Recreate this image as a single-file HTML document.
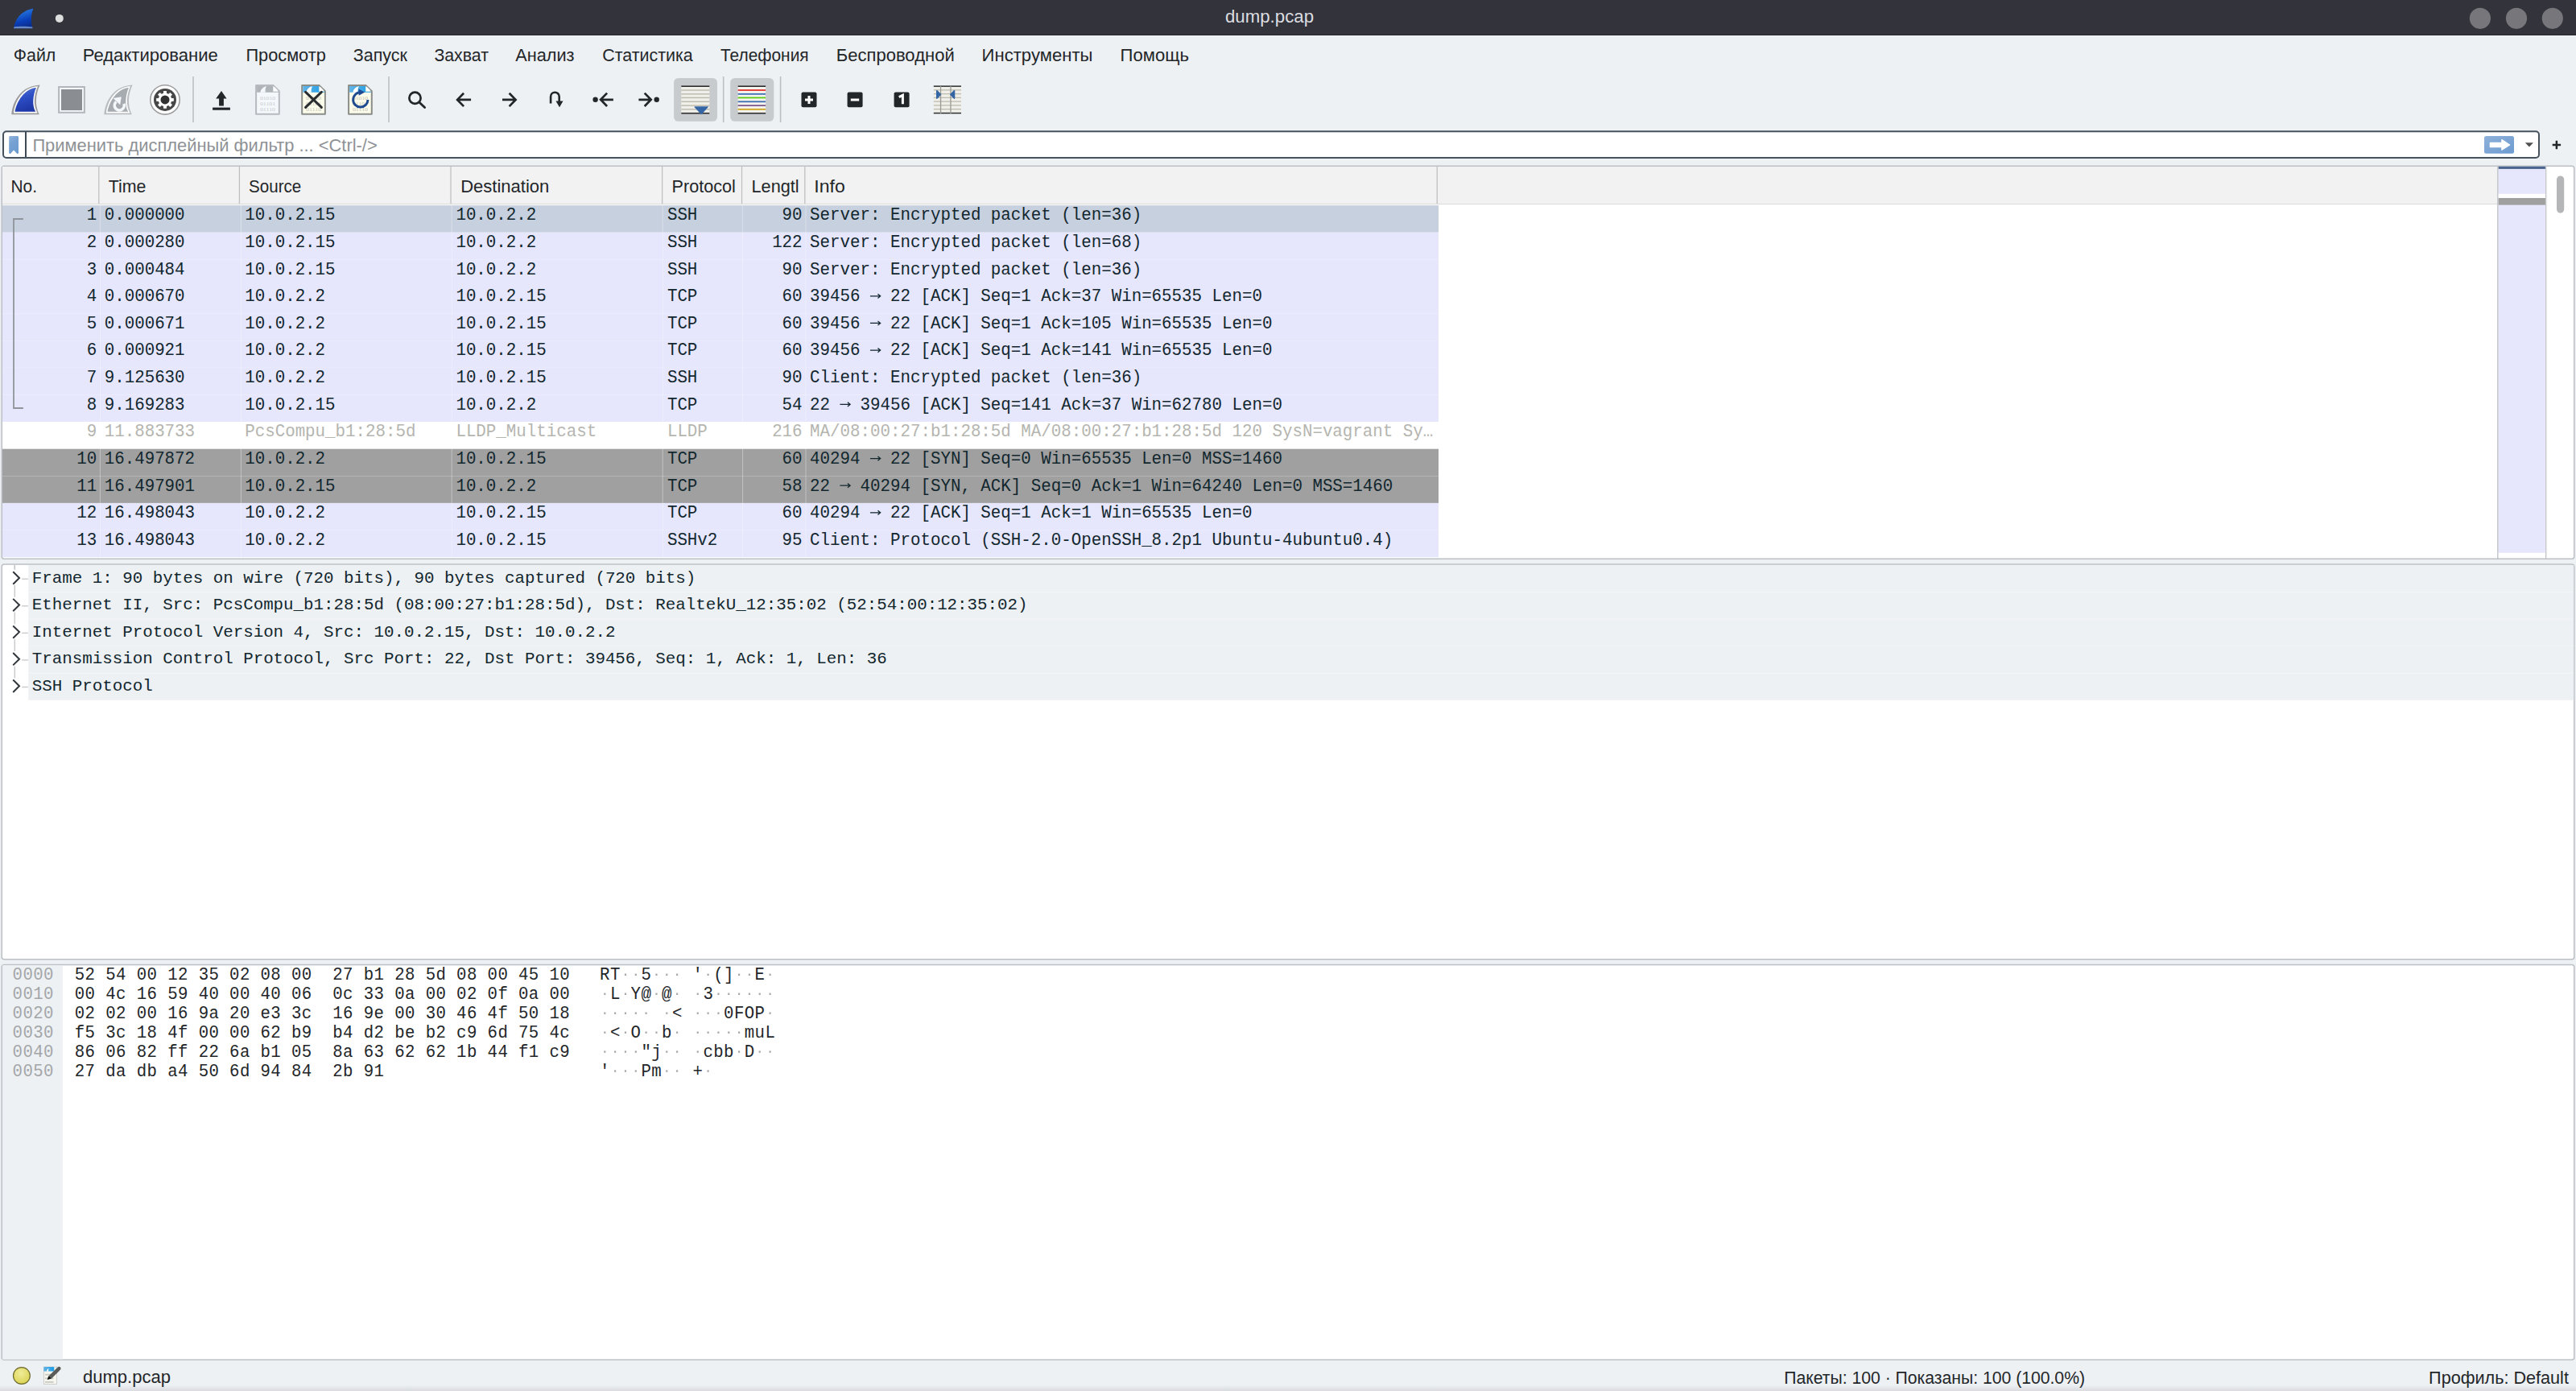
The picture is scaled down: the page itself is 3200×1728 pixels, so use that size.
<!DOCTYPE html><html><head><meta charset="utf-8"><title>dump.pcap - Wireshark</title><style>html,body{margin:0;padding:0;background:#eef1f4;overflow:hidden} svg{display:block} text{white-space:pre}</style></head><body>
<svg width="3200" height="1728" viewBox="0 0 3200 1728">
<defs>
<linearGradient id="finb" x1="0" y1="0" x2="0.3" y2="1"><stop offset="0" stop-color="#5a78d8"/><stop offset="0.5" stop-color="#2d4ec4"/><stop offset="1" stop-color="#1f38a8"/></linearGradient>
<linearGradient id="fint" x1="0" y1="0" x2="0.3" y2="1"><stop offset="0" stop-color="#2f8cf0"/><stop offset="0.7" stop-color="#0a3fb8"/><stop offset="1" stop-color="#0b2f90"/></linearGradient>
<linearGradient id="bkm" x1="0" y1="0" x2="0.4" y2="1"><stop offset="0" stop-color="#90b2dc"/><stop offset="0.5" stop-color="#74a0d2"/><stop offset="1" stop-color="#6f9ccf"/></linearGradient>
<linearGradient id="apb" x1="0" y1="0" x2="1" y2="1"><stop offset="0" stop-color="#8eb0da"/><stop offset="1" stop-color="#6c9bd0"/></linearGradient>
<linearGradient id="fileb" x1="0" y1="0" x2="1" y2="0"><stop offset="0" stop-color="#62b4e6"/><stop offset="1" stop-color="#1d9ee6"/></linearGradient>
<radialGradient id="yel" cx="0.45" cy="0.35" r="0.7"><stop offset="0" stop-color="#f0ec9a"/><stop offset="1" stop-color="#d9d24e"/></radialGradient>
</defs>
<rect x="0" y="0" width="3200" height="1728" fill="#eef1f4" />
<rect x="0" y="0" width="3200" height="44" fill="#32333b" />
<rect x="0" y="43" width="3200" height="1" fill="#25262c" />
<path d="M17 35.3 C19 24 26 13 41.5 10.8 C38.5 17 38 27 40.5 35.3 Z" fill="url(#fint)"/>
<path d="M17.5 33.5 C24 32.5 34 32.7 40.3 33.6 L40.5 35.3 L17 35.3 Z" fill="#8fb0e0" opacity="0.7"/>
<circle cx="73.8" cy="22.9" r="5" fill="#dedede"/>
<text x="1522" y="27.7" font-family="Liberation Sans" font-size="21.7" fill="#dcdde0" textLength="110" lengthAdjust="spacingAndGlyphs" >dump.pcap</text>
<circle cx="3080.9" cy="22.8" r="13.1" fill="#77767b"/>
<circle cx="3126" cy="22.8" r="13.1" fill="#77767b"/>
<circle cx="3170.8" cy="22.8" r="13.1" fill="#77767b"/>
<text x="16.8" y="75.7" font-family="Liberation Sans" font-size="21.7" fill="#232629" textLength="52.5" lengthAdjust="spacingAndGlyphs" >Файл</text>
<text x="102.7" y="75.7" font-family="Liberation Sans" font-size="21.7" fill="#232629" textLength="168.2" lengthAdjust="spacingAndGlyphs" >Редактирование</text>
<text x="305.4" y="75.7" font-family="Liberation Sans" font-size="21.7" fill="#232629" textLength="99.4" lengthAdjust="spacingAndGlyphs" >Просмотр</text>
<text x="438.8" y="75.7" font-family="Liberation Sans" font-size="21.7" fill="#232629" textLength="67.2" lengthAdjust="spacingAndGlyphs" >Запуск</text>
<text x="539.4" y="75.7" font-family="Liberation Sans" font-size="21.7" fill="#232629" textLength="67.6" lengthAdjust="spacingAndGlyphs" >Захват</text>
<text x="640.3" y="75.7" font-family="Liberation Sans" font-size="21.7" fill="#232629" textLength="73.2" lengthAdjust="spacingAndGlyphs" >Анализ</text>
<text x="748.2" y="75.7" font-family="Liberation Sans" font-size="21.7" fill="#232629" textLength="112.6" lengthAdjust="spacingAndGlyphs" >Статистика</text>
<text x="895" y="75.7" font-family="Liberation Sans" font-size="21.7" fill="#232629" textLength="109.6" lengthAdjust="spacingAndGlyphs" >Телефония</text>
<text x="1038.8" y="75.7" font-family="Liberation Sans" font-size="21.7" fill="#232629" textLength="146.9" lengthAdjust="spacingAndGlyphs" >Беспроводной</text>
<text x="1219.6" y="75.7" font-family="Liberation Sans" font-size="21.7" fill="#232629" textLength="137.8" lengthAdjust="spacingAndGlyphs" >Инструменты</text>
<text x="1391.6" y="75.7" font-family="Liberation Sans" font-size="21.7" fill="#232629" textLength="85.4" lengthAdjust="spacingAndGlyphs" >Помощь</text>
<path d="M14.30 142.30 C15.80 124.00 27.30 106.50 49.60 105.40 C44.30 117.00 42.80 130.00 48.80 142.30 Z" fill="#9b9b9b"/>
<path d="M16.90 140.60 C18.50 124.50 29.30 108.00 47.00 107.20 C42.30 118.00 40.90 130.00 46.50 140.60 Z" fill="#ffffff"/>
<path d="M18.50 138.80 C20.80 125.50 30.80 110.00 44.90 108.90 C40.80 119.00 39.70 130.50 44.20 138.80 Z" fill="url(#finb)"/>
<rect x="72.1" y="107" width="33.8" height="33.8" fill="#b3b7bb" />
<rect x="74.1" y="109" width="29.8" height="29.8" fill="#f4f8fb" />
<rect x="76" y="111" width="26" height="26" fill="#8a8e92" />
<path d="M129.30 142.30 C130.80 124.00 142.30 106.50 164.60 105.40 C159.30 117.00 157.80 130.00 163.80 142.30 Z" fill="#b9bdc1"/>
<path d="M131.90 140.60 C133.50 124.50 144.30 108.00 162.00 107.20 C157.30 118.00 155.90 130.00 161.50 140.60 Z" fill="#ffffff"/>
<path d="M133.50 138.80 C135.80 125.50 145.80 110.00 159.90 108.90 C155.80 119.00 154.70 130.50 159.20 138.80 Z" fill="#a7acb1"/>
<path d="M153.94 128.85 A6 6 0 1 1 144.44 126.3" fill="none" stroke="#f4f8fb" stroke-width="3.6"/>
<path d="M140.6 121.9 L150.8 120.3 L149.2 130.2 Z" fill="#f4f8fb"/>
<circle cx="205" cy="123.9" r="18.2" fill="#ffffff" stroke="#9d9d9d" stroke-width="1.6"/>
<circle cx="205" cy="123.9" r="14" fill="#474747"/>
<path d="M213.05 121.89 L215.83 121.99 L215.83 125.81 L213.05 125.91 L212.11 128.17 L214.01 130.21 L211.31 132.91 L209.27 131.01 L207.01 131.95 L206.91 134.73 L203.09 134.73 L202.99 131.95 L200.73 131.01 L198.69 132.91 L195.99 130.21 L197.89 128.17 L196.95 125.91 L194.17 125.81 L194.17 121.99 L196.95 121.89 L197.89 119.63 L195.99 117.59 L198.69 114.89 L200.73 116.79 L202.99 115.85 L203.09 113.07 L206.91 113.07 L207.01 115.85 L209.27 116.79 L211.31 114.89 L214.01 117.59 L212.11 119.63 Z" fill="#ffffff"/>
<circle cx="205" cy="123.9" r="5.5" fill="#313131"/>
<rect x="239.2" y="95" width="1.6" height="57" fill="#bcc0c3" />
<rect x="482.2" y="95" width="1.6" height="57" fill="#bcc0c3" />
<rect x="897.9000000000001" y="95" width="1.6" height="57" fill="#bcc0c3" />
<rect x="968.8000000000001" y="95" width="1.6" height="57" fill="#bcc0c3" />
<path d="M275 113 L281.6 122.5 L277.9 122.5 L277.9 131.6 L272.1 131.6 L272.1 122.5 L268.2 122.5 Z" fill="#232629"/>
<rect x="264.1" y="133.6" width="21.8" height="3.1" fill="#1f2226" />
<path d="M318.1 106.1 L339.6 106.1 L346.8 113.3 L346.8 141.7 L318.1 141.7 Z" fill="#f5f8fb" stroke="#b6babe" stroke-width="2" stroke-linejoin="round"/>
<path d="M319.1 107.1 L339.20000000000005 107.1 L339.20000000000005 113.7 L345.8 113.7 L345.8 114.7 L319.1 114.7 Z" fill="#afb4b9"/>
<path d="M340.20000000000005 107.3 L340.20000000000005 112.7 L345.6 112.7 Z" fill="#ffffff"/>
<path d="M323.3 114.7 C324.1 110.6 327.1 107.89999999999999 330.90000000000003 107.3 C329.70000000000005 109.5 329.3 112.1 329.70000000000005 114.7 Z" fill="#f5f8fb"/>
<text x="322.90000000000003" y="123.8" font-family="Liberation Serif" font-size="6.4" fill="#c6cacd" textLength="19.2" lengthAdjust="spacingAndGlyphs">01010</text>
<text x="322.90000000000003" y="130.85" font-family="Liberation Serif" font-size="6.4" fill="#c6cacd" textLength="19.2" lengthAdjust="spacingAndGlyphs">01101</text>
<text x="322.90000000000003" y="137.9" font-family="Liberation Serif" font-size="6.4" fill="#c6cacd" textLength="19.2" lengthAdjust="spacingAndGlyphs">01110</text>
<path d="M375.2 106.1 L396.7 106.1 L403.9 113.3 L403.9 141.7 L375.2 141.7 Z" fill="#fcfcea" stroke="#8b8d89" stroke-width="2" stroke-linejoin="round"/>
<path d="M376.2 107.1 L396.3 107.1 L396.3 113.7 L402.9 113.7 L402.9 114.7 L376.2 114.7 Z" fill="url(#fileb)"/>
<path d="M397.3 107.3 L397.3 112.7 L402.7 112.7 Z" fill="#ffffff"/>
<path d="M380.4 114.7 C381.2 110.6 384.2 107.89999999999999 388.0 107.3 C386.8 109.5 386.4 112.1 386.8 114.7 Z" fill="#ffffff"/>
<text x="380.0" y="123.8" font-family="Liberation Serif" font-size="6.4" fill="#c2c2b6" textLength="19.2" lengthAdjust="spacingAndGlyphs">01010</text>
<text x="380.0" y="130.85" font-family="Liberation Serif" font-size="6.4" fill="#c2c2b6" textLength="19.2" lengthAdjust="spacingAndGlyphs">01101</text>
<text x="380.0" y="137.9" font-family="Liberation Serif" font-size="6.4" fill="#c2c2b6" textLength="19.2" lengthAdjust="spacingAndGlyphs">01110</text>
<path d="M379.6 114.4 L399.4 133.4 M399.4 114.4 L379.6 133.4" stroke="#2a2d30" stroke-width="3" stroke-linecap="round"/>
<path d="M433.1 106.1 L454.6 106.1 L461.8 113.3 L461.8 141.7 L433.1 141.7 Z" fill="#fcfcea" stroke="#8b8d89" stroke-width="2" stroke-linejoin="round"/>
<path d="M434.1 107.1 L454.20000000000005 107.1 L454.20000000000005 113.7 L460.8 113.7 L460.8 114.7 L434.1 114.7 Z" fill="url(#fileb)"/>
<path d="M455.20000000000005 107.3 L455.20000000000005 112.7 L460.6 112.7 Z" fill="#ffffff"/>
<path d="M438.3 114.7 C439.1 110.6 442.1 107.89999999999999 445.90000000000003 107.3 C444.70000000000005 109.5 444.3 112.1 444.70000000000005 114.7 Z" fill="#ffffff"/>
<text x="437.90000000000003" y="123.8" font-family="Liberation Serif" font-size="6.4" fill="#c2c2b6" textLength="19.2" lengthAdjust="spacingAndGlyphs">01010</text>
<text x="437.90000000000003" y="130.85" font-family="Liberation Serif" font-size="6.4" fill="#c2c2b6" textLength="19.2" lengthAdjust="spacingAndGlyphs">01101</text>
<text x="437.90000000000003" y="137.9" font-family="Liberation Serif" font-size="6.4" fill="#c2c2b6" textLength="19.2" lengthAdjust="spacingAndGlyphs">01110</text>
<path d="M447.8 114.75 A9.15 9.15 0 1 0 456.95 123.9" fill="none" stroke="#1f4b91" stroke-width="2.9"/>
<path d="M445.4 110.4 L453.2 114.6 L445.7 118.8 Z" fill="#1f4b91"/>
<circle cx="515.5" cy="121.7" r="7.1" fill="none" stroke="#232629" stroke-width="2.7"/>
<path d="M520.8 127 L527.6 133.6" stroke="#232629" stroke-width="2.8" stroke-linecap="round"/>
<path d="M576.1 115.7 L568.1 123.9 L576.1 132.1 M568.5 123.9 L585.1 123.9" fill="none" stroke="#232629" stroke-width="2.7"/>
<path d="M632.6 115.7 L640.6 123.9 L632.6 132.1 M624 123.9 L640.2 123.9" fill="none" stroke="#232629" stroke-width="2.7"/>
<path d="M684.1 128.5 L684.1 120 A5.3 5.3 0 0 1 694.7 120 L694.7 126" fill="none" stroke="#232629" stroke-width="2.6"/>
<path d="M690.5 125.4 L699.5 125.4 L695 133.2 Z" fill="#232629"/>
<circle cx="739.6" cy="123.8" r="3.2" fill="#232629"/>
<path d="M754.1 115.6 L746.1 123.8 L754.1 132 M746.5 123.8 L761.9 123.8" fill="none" stroke="#232629" stroke-width="2.7"/>
<circle cx="815.7" cy="123.8" r="3.2" fill="#232629"/>
<path d="M800.7 115.6 L808.7 123.8 L800.7 132 M793.4 123.8 L808.3 123.8" fill="none" stroke="#232629" stroke-width="2.7"/>
<rect x="837.1" y="96.9" width="53.9" height="53.9" fill="#c8cbce" rx="5.5" />
<rect x="846.3" y="107.5" width="35" height="33" fill="#f0efe9" />
<rect x="846.3" y="111.3" width="35" height="1.4" fill="#b9b9ad" />
<rect x="846.3" y="116.1" width="35" height="1.4" fill="#b9b9ad" />
<rect x="846.3" y="120.7" width="35" height="1.4" fill="#b9b9ad" />
<rect x="846.3" y="125.6" width="35" height="1.4" fill="#b9b9ad" />
<rect x="846.3" y="130.4" width="35" height="1.4" fill="#b9b9ad" />
<rect x="846.3" y="135.10000000000002" width="35" height="1.4" fill="#b9b9ad" />
<rect x="846.3" y="106.4" width="35" height="1.6" fill="#2b2d2e" />
<rect x="846.3" y="139.9" width="35" height="1.6" fill="#2b2d2e" />
<path d="M862.5 133 Q862 132.2 863.3 132.2 L879.2 132.2 Q880.5 132.2 879.8 133 L872.3 141.2 Q871.2 142.2 870.1 141.2 Z" fill="#3465a4"/>
<rect x="907.2" y="96.9" width="54.1" height="53.9" fill="#c8cbce" rx="5.5" />
<rect x="916.7" y="107.5" width="34.4" height="33" fill="#f4f3ee" />
<rect x="916.7" y="111.1" width="34.4" height="1.8" fill="#e5322d" />
<rect x="916.7" y="115.89999999999999" width="34.4" height="1.8" fill="#3a6db3" />
<rect x="916.7" y="120.5" width="34.4" height="1.8" fill="#5ccc14" />
<rect x="916.7" y="125.39999999999999" width="34.4" height="1.8" fill="#3a6db3" />
<rect x="916.7" y="130.2" width="34.4" height="1.8" fill="#7e5b8d" />
<rect x="916.7" y="134.9" width="34.4" height="1.8" fill="#cca51c" />
<rect x="916.7" y="106.4" width="34.4" height="1.6" fill="#2b2d2e" />
<rect x="916.7" y="139.9" width="34.4" height="1.6" fill="#2b2d2e" />
<rect x="995.5" y="114.5" width="19" height="18.8" fill="#232629" rx="2" />
<rect x="1052.6" y="114.5" width="19" height="18.8" fill="#232629" rx="2" />
<rect x="1110.6" y="114.5" width="19" height="18.8" fill="#232629" rx="2" />
<path d="M1005 119 L1005 129 M1000 124 L1010 124" stroke="#ffffff" stroke-width="3"/>
<path d="M1056.8 124 L1067.2 124" stroke="#ffffff" stroke-width="3"/>
<path d="M1116.8 120.6 L1121.4 118.2 L1121.4 129.3" fill="none" stroke="#ffffff" stroke-width="3" stroke-linejoin="miter"/>
<rect x="1159.8" y="107.5" width="34.2" height="33" fill="#f0efe9" />
<rect x="1159.8" y="111.2" width="34.2" height="1.3" fill="#bcbdb1" />
<rect x="1159.8" y="115.95" width="34.2" height="1.3" fill="#bcbdb1" />
<rect x="1159.8" y="120.7" width="34.2" height="1.3" fill="#bcbdb1" />
<rect x="1159.8" y="125.45" width="34.2" height="1.3" fill="#bcbdb1" />
<rect x="1159.8" y="130.20000000000002" width="34.2" height="1.3" fill="#bcbdb1" />
<rect x="1159.8" y="134.95000000000002" width="34.2" height="1.3" fill="#bcbdb1" />
<rect x="1159.8" y="106.4" width="34.2" height="1.5" fill="#2b2d2e" />
<rect x="1159.8" y="139.8" width="34.2" height="1.5" fill="#2b2d2e" />
<rect x="1167.9" y="107" width="1.3" height="34" fill="#9a9a94" />
<rect x="1180.3" y="107" width="1.3" height="34" fill="#9a9a94" />
<path d="M1163.9 112.8 L1168.2 117.4 L1163.9 122 Z" fill="#3465a4" stroke="#3465a4" stroke-width="1.8" stroke-linejoin="round"/>
<path d="M1185.4 112.8 L1181.1 117.4 L1185.4 122 Z" fill="#3465a4" stroke="#3465a4" stroke-width="1.8" stroke-linejoin="round"/>
<rect x="4" y="163.2" width="3150" height="32.8" rx="4" fill="#ffffff" stroke="#45525d" stroke-width="2"/>
<path d="M11.2 170.2 Q11.2 169 12.4 169 L21.8 169 Q23 169 23 170.2 L23 189.8 Q23 191 21.8 191 L21.2 191 L17.1 186.6 L12.8 191 L12.2 191 Q11.2 191 11.2 189.8 Z" fill="url(#bkm)"/>
<rect x="31" y="163.5" width="2" height="31.5" fill="#3d4a55" />
<text x="40.4" y="188.2" font-family="Liberation Sans" font-size="21.7" fill="#8e9296" textLength="428.3" lengthAdjust="spacingAndGlyphs" >Применить дисплейный фильтр ... &lt;Ctrl-/&gt;</text>
<rect x="3086" y="168.9" width="37" height="21.8" rx="2.5" fill="url(#apb)"/>
<path d="M3093.3 177.4 L3107.8 177.4 L3107.8 173.6 L3117.7 180 L3107.8 186.2 L3107.8 182.6 L3093.3 182.6 Z" fill="#ffffff" stroke="#ffffff" stroke-width="1.2" stroke-linejoin="round"/>
<path d="M3136.8 177.2 L3147 177.2 L3141.9 182.6 Z" fill="#4f514f"/>
<path d="M3175.9 174.8 L3175.9 185.2 M3170.7 180 L3181.1 180" stroke="#232629" stroke-width="2.5"/>
<rect x="2.25" y="206.25" width="3195.5" height="488" rx="3" fill="#ffffff" stroke="#bcc0c4" stroke-width="1.5"/>
<rect x="3" y="207" width="3099.5" height="46.5" fill="#f2f2f2" />
<rect x="3" y="253" width="3099.5" height="1" fill="#dadada" />
<rect x="122.2" y="207" width="1.25" height="46" fill="#bfbfbf" />
<rect x="296.79999999999995" y="207" width="1.25" height="46" fill="#bfbfbf" />
<rect x="559.4" y="207" width="1.25" height="46" fill="#bfbfbf" />
<rect x="822.0" y="207" width="1.25" height="46" fill="#bfbfbf" />
<rect x="920.9" y="207" width="1.25" height="46" fill="#bfbfbf" />
<rect x="999.1999999999999" y="207" width="1.25" height="46" fill="#bfbfbf" />
<rect x="1784.6000000000001" y="207" width="1.25" height="46" fill="#bfbfbf" />
<text x="13.5" y="239" font-family="Liberation Sans" font-size="21.7" fill="#232629" textLength="32.5" lengthAdjust="spacingAndGlyphs" >No.</text>
<text x="134.8" y="239" font-family="Liberation Sans" font-size="21.7" fill="#232629" textLength="46.7" lengthAdjust="spacingAndGlyphs" >Time</text>
<text x="309.1" y="239" font-family="Liberation Sans" font-size="21.7" fill="#232629" textLength="65.2" lengthAdjust="spacingAndGlyphs" >Source</text>
<text x="572.2" y="239" font-family="Liberation Sans" font-size="21.7" fill="#232629" textLength="110.2" lengthAdjust="spacingAndGlyphs" >Destination</text>
<text x="834.6" y="239" font-family="Liberation Sans" font-size="21.7" fill="#232629" textLength="79.3" lengthAdjust="spacingAndGlyphs" >Protocol</text>
<text x="933.5" y="239" font-family="Liberation Sans" font-size="21.7" fill="#232629" textLength="59.1" lengthAdjust="spacingAndGlyphs" >Lengtl</text>
<text x="1011.3" y="239" font-family="Liberation Sans" font-size="21.7" fill="#232629" textLength="38.5" lengthAdjust="spacingAndGlyphs" >Info</text>
<rect x="3" y="255.1" width="1784" height="33.62" fill="#c7d0df" />
<rect x="3" y="288.72" width="1784" height="33.62" fill="#e6e6fd" />
<rect x="3" y="322.34" width="1784" height="33.62" fill="#e6e6fd" />
<rect x="3" y="355.96" width="1784" height="33.62" fill="#e6e6fd" />
<rect x="3" y="389.58" width="1784" height="33.62" fill="#e6e6fd" />
<rect x="3" y="423.2" width="1784" height="33.62" fill="#e6e6fd" />
<rect x="3" y="456.82" width="1784" height="33.62" fill="#e6e6fd" />
<rect x="3" y="490.44" width="1784" height="33.62" fill="#e6e6fd" />
<rect x="3" y="524.06" width="1784" height="33.62" fill="#ffffff" />
<rect x="3" y="557.68" width="1784" height="33.62" fill="#a0a0a0" />
<rect x="3" y="591.3" width="1784" height="33.62" fill="#a0a0a0" />
<rect x="3" y="624.92" width="1784" height="33.62" fill="#e6e6fd" />
<rect x="3" y="658.54" width="1784" height="33.62" fill="#e6e6fd" />
<text transform="translate(120.3 273.3) scale(1 1.02)" x="0" y="0" font-family="Liberation Mono" font-size="20.83" fill="#12272e" text-anchor="end" xml:space="preserve" >1</text>
<text transform="translate(129.7 273.3) scale(1 1.02)" x="0" y="0" font-family="Liberation Mono" font-size="20.83" fill="#12272e" xml:space="preserve" >0.000000</text>
<text transform="translate(304.2 273.3) scale(1 1.02)" x="0" y="0" font-family="Liberation Mono" font-size="20.83" fill="#12272e" xml:space="preserve" >10.0.2.15</text>
<text transform="translate(566.4 273.3) scale(1 1.02)" x="0" y="0" font-family="Liberation Mono" font-size="20.83" fill="#12272e" xml:space="preserve" >10.0.2.2</text>
<text transform="translate(828.9 273.3) scale(1 1.02)" x="0" y="0" font-family="Liberation Mono" font-size="20.83" fill="#12272e" xml:space="preserve" >SSH</text>
<text transform="translate(996.6 273.3) scale(1 1.02)" x="0" y="0" font-family="Liberation Mono" font-size="20.83" fill="#12272e" text-anchor="end" xml:space="preserve" >90</text>
<text transform="translate(1006.1 273.3) scale(1 1.02)" x="0" y="0" font-family="Liberation Mono" font-size="20.83" fill="#12272e" xml:space="preserve" >Server: Encrypted packet (len=36)</text>
<text transform="translate(120.3 306.92) scale(1 1.02)" x="0" y="0" font-family="Liberation Mono" font-size="20.83" fill="#12272e" text-anchor="end" xml:space="preserve" >2</text>
<text transform="translate(129.7 306.92) scale(1 1.02)" x="0" y="0" font-family="Liberation Mono" font-size="20.83" fill="#12272e" xml:space="preserve" >0.000280</text>
<text transform="translate(304.2 306.92) scale(1 1.02)" x="0" y="0" font-family="Liberation Mono" font-size="20.83" fill="#12272e" xml:space="preserve" >10.0.2.15</text>
<text transform="translate(566.4 306.92) scale(1 1.02)" x="0" y="0" font-family="Liberation Mono" font-size="20.83" fill="#12272e" xml:space="preserve" >10.0.2.2</text>
<text transform="translate(828.9 306.92) scale(1 1.02)" x="0" y="0" font-family="Liberation Mono" font-size="20.83" fill="#12272e" xml:space="preserve" >SSH</text>
<text transform="translate(996.6 306.92) scale(1 1.02)" x="0" y="0" font-family="Liberation Mono" font-size="20.83" fill="#12272e" text-anchor="end" xml:space="preserve" >122</text>
<text transform="translate(1006.1 306.92) scale(1 1.02)" x="0" y="0" font-family="Liberation Mono" font-size="20.83" fill="#12272e" xml:space="preserve" >Server: Encrypted packet (len=68)</text>
<text transform="translate(120.3 340.54) scale(1 1.02)" x="0" y="0" font-family="Liberation Mono" font-size="20.83" fill="#12272e" text-anchor="end" xml:space="preserve" >3</text>
<text transform="translate(129.7 340.54) scale(1 1.02)" x="0" y="0" font-family="Liberation Mono" font-size="20.83" fill="#12272e" xml:space="preserve" >0.000484</text>
<text transform="translate(304.2 340.54) scale(1 1.02)" x="0" y="0" font-family="Liberation Mono" font-size="20.83" fill="#12272e" xml:space="preserve" >10.0.2.15</text>
<text transform="translate(566.4 340.54) scale(1 1.02)" x="0" y="0" font-family="Liberation Mono" font-size="20.83" fill="#12272e" xml:space="preserve" >10.0.2.2</text>
<text transform="translate(828.9 340.54) scale(1 1.02)" x="0" y="0" font-family="Liberation Mono" font-size="20.83" fill="#12272e" xml:space="preserve" >SSH</text>
<text transform="translate(996.6 340.54) scale(1 1.02)" x="0" y="0" font-family="Liberation Mono" font-size="20.83" fill="#12272e" text-anchor="end" xml:space="preserve" >90</text>
<text transform="translate(1006.1 340.54) scale(1 1.02)" x="0" y="0" font-family="Liberation Mono" font-size="20.83" fill="#12272e" xml:space="preserve" >Server: Encrypted packet (len=36)</text>
<text transform="translate(120.3 374.16) scale(1 1.02)" x="0" y="0" font-family="Liberation Mono" font-size="20.83" fill="#12272e" text-anchor="end" xml:space="preserve" >4</text>
<text transform="translate(129.7 374.16) scale(1 1.02)" x="0" y="0" font-family="Liberation Mono" font-size="20.83" fill="#12272e" xml:space="preserve" >0.000670</text>
<text transform="translate(304.2 374.16) scale(1 1.02)" x="0" y="0" font-family="Liberation Mono" font-size="20.83" fill="#12272e" xml:space="preserve" >10.0.2.2</text>
<text transform="translate(566.4 374.16) scale(1 1.02)" x="0" y="0" font-family="Liberation Mono" font-size="20.83" fill="#12272e" xml:space="preserve" >10.0.2.15</text>
<text transform="translate(828.9 374.16) scale(1 1.02)" x="0" y="0" font-family="Liberation Mono" font-size="20.83" fill="#12272e" xml:space="preserve" >TCP</text>
<text transform="translate(996.6 374.16) scale(1 1.02)" x="0" y="0" font-family="Liberation Mono" font-size="20.83" fill="#12272e" text-anchor="end" xml:space="preserve" >60</text>
<text transform="translate(1006.1 374.16) scale(1 1.02)" x="0" y="0" font-family="Liberation Mono" font-size="20.83" fill="#12272e" xml:space="preserve" >39456   22 [ACK] Seq=1 Ack=37 Win=65535 Len=0</text>
<path d="M1080.96 367.86 L1093.56 367.86 M1090.46 365.26 L1093.66 367.86 L1090.46 370.46" fill="none" stroke="#12272e" stroke-width="1.25"/>
<text transform="translate(120.3 407.78) scale(1 1.02)" x="0" y="0" font-family="Liberation Mono" font-size="20.83" fill="#12272e" text-anchor="end" xml:space="preserve" >5</text>
<text transform="translate(129.7 407.78) scale(1 1.02)" x="0" y="0" font-family="Liberation Mono" font-size="20.83" fill="#12272e" xml:space="preserve" >0.000671</text>
<text transform="translate(304.2 407.78) scale(1 1.02)" x="0" y="0" font-family="Liberation Mono" font-size="20.83" fill="#12272e" xml:space="preserve" >10.0.2.2</text>
<text transform="translate(566.4 407.78) scale(1 1.02)" x="0" y="0" font-family="Liberation Mono" font-size="20.83" fill="#12272e" xml:space="preserve" >10.0.2.15</text>
<text transform="translate(828.9 407.78) scale(1 1.02)" x="0" y="0" font-family="Liberation Mono" font-size="20.83" fill="#12272e" xml:space="preserve" >TCP</text>
<text transform="translate(996.6 407.78) scale(1 1.02)" x="0" y="0" font-family="Liberation Mono" font-size="20.83" fill="#12272e" text-anchor="end" xml:space="preserve" >60</text>
<text transform="translate(1006.1 407.78) scale(1 1.02)" x="0" y="0" font-family="Liberation Mono" font-size="20.83" fill="#12272e" xml:space="preserve" >39456   22 [ACK] Seq=1 Ack=105 Win=65535 Len=0</text>
<path d="M1080.96 401.48 L1093.56 401.48 M1090.46 398.88 L1093.66 401.48 L1090.46 404.08" fill="none" stroke="#12272e" stroke-width="1.25"/>
<text transform="translate(120.3 441.4) scale(1 1.02)" x="0" y="0" font-family="Liberation Mono" font-size="20.83" fill="#12272e" text-anchor="end" xml:space="preserve" >6</text>
<text transform="translate(129.7 441.4) scale(1 1.02)" x="0" y="0" font-family="Liberation Mono" font-size="20.83" fill="#12272e" xml:space="preserve" >0.000921</text>
<text transform="translate(304.2 441.4) scale(1 1.02)" x="0" y="0" font-family="Liberation Mono" font-size="20.83" fill="#12272e" xml:space="preserve" >10.0.2.2</text>
<text transform="translate(566.4 441.4) scale(1 1.02)" x="0" y="0" font-family="Liberation Mono" font-size="20.83" fill="#12272e" xml:space="preserve" >10.0.2.15</text>
<text transform="translate(828.9 441.4) scale(1 1.02)" x="0" y="0" font-family="Liberation Mono" font-size="20.83" fill="#12272e" xml:space="preserve" >TCP</text>
<text transform="translate(996.6 441.4) scale(1 1.02)" x="0" y="0" font-family="Liberation Mono" font-size="20.83" fill="#12272e" text-anchor="end" xml:space="preserve" >60</text>
<text transform="translate(1006.1 441.4) scale(1 1.02)" x="0" y="0" font-family="Liberation Mono" font-size="20.83" fill="#12272e" xml:space="preserve" >39456   22 [ACK] Seq=1 Ack=141 Win=65535 Len=0</text>
<path d="M1080.96 435.10 L1093.56 435.10 M1090.46 432.50 L1093.66 435.10 L1090.46 437.70" fill="none" stroke="#12272e" stroke-width="1.25"/>
<text transform="translate(120.3 475.02) scale(1 1.02)" x="0" y="0" font-family="Liberation Mono" font-size="20.83" fill="#12272e" text-anchor="end" xml:space="preserve" >7</text>
<text transform="translate(129.7 475.02) scale(1 1.02)" x="0" y="0" font-family="Liberation Mono" font-size="20.83" fill="#12272e" xml:space="preserve" >9.125630</text>
<text transform="translate(304.2 475.02) scale(1 1.02)" x="0" y="0" font-family="Liberation Mono" font-size="20.83" fill="#12272e" xml:space="preserve" >10.0.2.2</text>
<text transform="translate(566.4 475.02) scale(1 1.02)" x="0" y="0" font-family="Liberation Mono" font-size="20.83" fill="#12272e" xml:space="preserve" >10.0.2.15</text>
<text transform="translate(828.9 475.02) scale(1 1.02)" x="0" y="0" font-family="Liberation Mono" font-size="20.83" fill="#12272e" xml:space="preserve" >SSH</text>
<text transform="translate(996.6 475.02) scale(1 1.02)" x="0" y="0" font-family="Liberation Mono" font-size="20.83" fill="#12272e" text-anchor="end" xml:space="preserve" >90</text>
<text transform="translate(1006.1 475.02) scale(1 1.02)" x="0" y="0" font-family="Liberation Mono" font-size="20.83" fill="#12272e" xml:space="preserve" >Client: Encrypted packet (len=36)</text>
<text transform="translate(120.3 508.64) scale(1 1.02)" x="0" y="0" font-family="Liberation Mono" font-size="20.83" fill="#12272e" text-anchor="end" xml:space="preserve" >8</text>
<text transform="translate(129.7 508.64) scale(1 1.02)" x="0" y="0" font-family="Liberation Mono" font-size="20.83" fill="#12272e" xml:space="preserve" >9.169283</text>
<text transform="translate(304.2 508.64) scale(1 1.02)" x="0" y="0" font-family="Liberation Mono" font-size="20.83" fill="#12272e" xml:space="preserve" >10.0.2.15</text>
<text transform="translate(566.4 508.64) scale(1 1.02)" x="0" y="0" font-family="Liberation Mono" font-size="20.83" fill="#12272e" xml:space="preserve" >10.0.2.2</text>
<text transform="translate(828.9 508.64) scale(1 1.02)" x="0" y="0" font-family="Liberation Mono" font-size="20.83" fill="#12272e" xml:space="preserve" >TCP</text>
<text transform="translate(996.6 508.64) scale(1 1.02)" x="0" y="0" font-family="Liberation Mono" font-size="20.83" fill="#12272e" text-anchor="end" xml:space="preserve" >54</text>
<text transform="translate(1006.1 508.64) scale(1 1.02)" x="0" y="0" font-family="Liberation Mono" font-size="20.83" fill="#12272e" xml:space="preserve" >22   39456 [ACK] Seq=141 Ack=37 Win=62780 Len=0</text>
<path d="M1043.43 502.34 L1056.03 502.34 M1052.93 499.74 L1056.13 502.34 L1052.93 504.94" fill="none" stroke="#12272e" stroke-width="1.25"/>
<text transform="translate(120.3 542.26) scale(1 1.02)" x="0" y="0" font-family="Liberation Mono" font-size="20.83" fill="#b5b5b0" text-anchor="end" xml:space="preserve" >9</text>
<text transform="translate(129.7 542.26) scale(1 1.02)" x="0" y="0" font-family="Liberation Mono" font-size="20.83" fill="#b5b5b0" xml:space="preserve" >11.883733</text>
<text transform="translate(304.2 542.26) scale(1 1.02)" x="0" y="0" font-family="Liberation Mono" font-size="20.83" fill="#b5b5b0" xml:space="preserve" >PcsCompu_b1:28:5d</text>
<text transform="translate(566.4 542.26) scale(1 1.02)" x="0" y="0" font-family="Liberation Mono" font-size="20.83" fill="#b5b5b0" xml:space="preserve" >LLDP_Multicast</text>
<text transform="translate(828.9 542.26) scale(1 1.02)" x="0" y="0" font-family="Liberation Mono" font-size="20.83" fill="#b5b5b0" xml:space="preserve" >LLDP</text>
<text transform="translate(996.6 542.26) scale(1 1.02)" x="0" y="0" font-family="Liberation Mono" font-size="20.83" fill="#b5b5b0" text-anchor="end" xml:space="preserve" >216</text>
<text transform="translate(1006.1 542.26) scale(1 1.02)" x="0" y="0" font-family="Liberation Mono" font-size="20.83" fill="#b5b5b0" xml:space="preserve" >MA/08:00:27:b1:28:5d MA/08:00:27:b1:28:5d 120 SysN=vagrant Sy…</text>
<text transform="translate(120.3 575.88) scale(1 1.02)" x="0" y="0" font-family="Liberation Mono" font-size="20.83" fill="#12272e" text-anchor="end" xml:space="preserve" >10</text>
<text transform="translate(129.7 575.88) scale(1 1.02)" x="0" y="0" font-family="Liberation Mono" font-size="20.83" fill="#12272e" xml:space="preserve" >16.497872</text>
<text transform="translate(304.2 575.88) scale(1 1.02)" x="0" y="0" font-family="Liberation Mono" font-size="20.83" fill="#12272e" xml:space="preserve" >10.0.2.2</text>
<text transform="translate(566.4 575.88) scale(1 1.02)" x="0" y="0" font-family="Liberation Mono" font-size="20.83" fill="#12272e" xml:space="preserve" >10.0.2.15</text>
<text transform="translate(828.9 575.88) scale(1 1.02)" x="0" y="0" font-family="Liberation Mono" font-size="20.83" fill="#12272e" xml:space="preserve" >TCP</text>
<text transform="translate(996.6 575.88) scale(1 1.02)" x="0" y="0" font-family="Liberation Mono" font-size="20.83" fill="#12272e" text-anchor="end" xml:space="preserve" >60</text>
<text transform="translate(1006.1 575.88) scale(1 1.02)" x="0" y="0" font-family="Liberation Mono" font-size="20.83" fill="#12272e" xml:space="preserve" >40294   22 [SYN] Seq=0 Win=65535 Len=0 MSS=1460</text>
<path d="M1080.96 569.58 L1093.56 569.58 M1090.46 566.98 L1093.66 569.58 L1090.46 572.18" fill="none" stroke="#12272e" stroke-width="1.25"/>
<text transform="translate(120.3 609.5) scale(1 1.02)" x="0" y="0" font-family="Liberation Mono" font-size="20.83" fill="#12272e" text-anchor="end" xml:space="preserve" >11</text>
<text transform="translate(129.7 609.5) scale(1 1.02)" x="0" y="0" font-family="Liberation Mono" font-size="20.83" fill="#12272e" xml:space="preserve" >16.497901</text>
<text transform="translate(304.2 609.5) scale(1 1.02)" x="0" y="0" font-family="Liberation Mono" font-size="20.83" fill="#12272e" xml:space="preserve" >10.0.2.15</text>
<text transform="translate(566.4 609.5) scale(1 1.02)" x="0" y="0" font-family="Liberation Mono" font-size="20.83" fill="#12272e" xml:space="preserve" >10.0.2.2</text>
<text transform="translate(828.9 609.5) scale(1 1.02)" x="0" y="0" font-family="Liberation Mono" font-size="20.83" fill="#12272e" xml:space="preserve" >TCP</text>
<text transform="translate(996.6 609.5) scale(1 1.02)" x="0" y="0" font-family="Liberation Mono" font-size="20.83" fill="#12272e" text-anchor="end" xml:space="preserve" >58</text>
<text transform="translate(1006.1 609.5) scale(1 1.02)" x="0" y="0" font-family="Liberation Mono" font-size="20.83" fill="#12272e" xml:space="preserve" >22   40294 [SYN, ACK] Seq=0 Ack=1 Win=64240 Len=0 MSS=1460</text>
<path d="M1043.43 603.20 L1056.03 603.20 M1052.93 600.60 L1056.13 603.20 L1052.93 605.80" fill="none" stroke="#12272e" stroke-width="1.25"/>
<text transform="translate(120.3 643.12) scale(1 1.02)" x="0" y="0" font-family="Liberation Mono" font-size="20.83" fill="#12272e" text-anchor="end" xml:space="preserve" >12</text>
<text transform="translate(129.7 643.12) scale(1 1.02)" x="0" y="0" font-family="Liberation Mono" font-size="20.83" fill="#12272e" xml:space="preserve" >16.498043</text>
<text transform="translate(304.2 643.12) scale(1 1.02)" x="0" y="0" font-family="Liberation Mono" font-size="20.83" fill="#12272e" xml:space="preserve" >10.0.2.2</text>
<text transform="translate(566.4 643.12) scale(1 1.02)" x="0" y="0" font-family="Liberation Mono" font-size="20.83" fill="#12272e" xml:space="preserve" >10.0.2.15</text>
<text transform="translate(828.9 643.12) scale(1 1.02)" x="0" y="0" font-family="Liberation Mono" font-size="20.83" fill="#12272e" xml:space="preserve" >TCP</text>
<text transform="translate(996.6 643.12) scale(1 1.02)" x="0" y="0" font-family="Liberation Mono" font-size="20.83" fill="#12272e" text-anchor="end" xml:space="preserve" >60</text>
<text transform="translate(1006.1 643.12) scale(1 1.02)" x="0" y="0" font-family="Liberation Mono" font-size="20.83" fill="#12272e" xml:space="preserve" >40294   22 [ACK] Seq=1 Ack=1 Win=65535 Len=0</text>
<path d="M1080.96 636.82 L1093.56 636.82 M1090.46 634.22 L1093.66 636.82 L1090.46 639.42" fill="none" stroke="#12272e" stroke-width="1.25"/>
<text transform="translate(120.3 676.74) scale(1 1.02)" x="0" y="0" font-family="Liberation Mono" font-size="20.83" fill="#12272e" text-anchor="end" xml:space="preserve" >13</text>
<text transform="translate(129.7 676.74) scale(1 1.02)" x="0" y="0" font-family="Liberation Mono" font-size="20.83" fill="#12272e" xml:space="preserve" >16.498043</text>
<text transform="translate(304.2 676.74) scale(1 1.02)" x="0" y="0" font-family="Liberation Mono" font-size="20.83" fill="#12272e" xml:space="preserve" >10.0.2.2</text>
<text transform="translate(566.4 676.74) scale(1 1.02)" x="0" y="0" font-family="Liberation Mono" font-size="20.83" fill="#12272e" xml:space="preserve" >10.0.2.15</text>
<text transform="translate(828.9 676.74) scale(1 1.02)" x="0" y="0" font-family="Liberation Mono" font-size="20.83" fill="#12272e" xml:space="preserve" >SSHv2</text>
<text transform="translate(996.6 676.74) scale(1 1.02)" x="0" y="0" font-family="Liberation Mono" font-size="20.83" fill="#12272e" text-anchor="end" xml:space="preserve" >95</text>
<text transform="translate(1006.1 676.74) scale(1 1.02)" x="0" y="0" font-family="Liberation Mono" font-size="20.83" fill="#12272e" xml:space="preserve" >Client: Protocol (SSH-2.0-OpenSSH_8.2p1 Ubuntu-4ubuntu0.4)</text>
<rect x="123.9" y="255" width="1" height="438" fill="#ffffff" opacity="0.35"/>
<rect x="298.9" y="255" width="1" height="438" fill="#ffffff" opacity="0.35"/>
<rect x="560.7" y="255" width="1" height="438" fill="#ffffff" opacity="0.35"/>
<rect x="822.7" y="255" width="1" height="438" fill="#ffffff" opacity="0.35"/>
<rect x="922.1" y="255" width="1" height="438" fill="#ffffff" opacity="0.35"/>
<rect x="1000.5" y="255" width="1" height="438" fill="#ffffff" opacity="0.35"/>
<path d="M28.9 272 L17 272 L17 507 L28.9 507" fill="none" stroke="#8f959a" stroke-width="1.8"/>
<rect x="3102.2" y="207" width="1.5" height="487" fill="#b9bdc1" />
<rect x="3161.9" y="207" width="1.3" height="487" fill="#c3c6c9" />
<rect x="3103.7" y="207" width="58.2" height="486" fill="#e6e6fd" />
<rect x="3103.7" y="206.9" width="58.2" height="3" fill="#48648f" />
<rect x="3103.7" y="240.8" width="58.2" height="5.2" fill="#ffffff" />
<rect x="3103.7" y="246" width="58.2" height="8.6" fill="#a0a0a0" />
<rect x="3103.7" y="686.8" width="58.2" height="6.2" fill="#ffffff" />
<rect x="3163.2" y="207" width="1" height="486" fill="#ececec" />
<rect x="3176" y="218.4" width="9.2" height="46.3" rx="4.6" fill="#b5b6b8"/>
<rect x="2.25" y="701" width="3195.5" height="490.75" rx="3" fill="#ffffff" stroke="#bcc0c4" stroke-width="1.5"/>
<rect x="35.2" y="702" width="3162" height="167.8" fill="#eef1f4" />
<rect x="35.2" y="735.06" width="3162" height="1" fill="#ffffff" opacity="0.3"/>
<rect x="35.2" y="768.62" width="3162" height="1" fill="#ffffff" opacity="0.3"/>
<rect x="35.2" y="802.18" width="3162" height="1" fill="#ffffff" opacity="0.3"/>
<rect x="35.2" y="835.74" width="3162" height="1" fill="#ffffff" opacity="0.3"/>
<rect x="17.7" y="702.0" width="1.2" height="5.5" fill="#c4c6c8" />
<rect x="17.7" y="735.56" width="1.2" height="0" fill="#c4c6c8" />
<rect x="17.7" y="769.12" width="1.2" height="0" fill="#c4c6c8" />
<rect x="17.7" y="802.6800000000001" width="1.2" height="0" fill="#c4c6c8" />
<rect x="17.7" y="836.24" width="1.2" height="0" fill="#c4c6c8" />
<rect x="17.6" y="727.0" width="1.3" height="14.8" fill="#c4c6c8" />
<path d="M16.2 710.30 L24 718.00 L16.2 725.70" fill="none" stroke="#31363b" stroke-width="2"/>
<rect x="27.2" y="718.6" width="7.7" height="1.3" fill="#c8c8c8" />
<text transform="translate(39.8 723.7) scale(1 1.01)" x="0" y="0" font-family="Liberation Mono" font-size="20.83" fill="#12272e" xml:space="preserve" >Frame 1: 90 bytes on wire (720 bits), 90 bytes captured (720 bits)</text>
<rect x="17.6" y="760.56" width="1.3" height="14.8" fill="#c4c6c8" />
<path d="M16.2 743.86 L24 751.56 L16.2 759.26" fill="none" stroke="#31363b" stroke-width="2"/>
<rect x="27.2" y="752.16" width="7.7" height="1.3" fill="#c8c8c8" />
<text transform="translate(39.8 757.26) scale(1 1.01)" x="0" y="0" font-family="Liberation Mono" font-size="20.83" fill="#12272e" xml:space="preserve" >Ethernet II, Src: PcsCompu_b1:28:5d (08:00:27:b1:28:5d), Dst: RealtekU_12:35:02 (52:54:00:12:35:02)</text>
<rect x="17.6" y="794.12" width="1.3" height="14.8" fill="#c4c6c8" />
<path d="M16.2 777.42 L24 785.12 L16.2 792.82" fill="none" stroke="#31363b" stroke-width="2"/>
<rect x="27.2" y="785.72" width="7.7" height="1.3" fill="#c8c8c8" />
<text transform="translate(39.8 790.82) scale(1 1.01)" x="0" y="0" font-family="Liberation Mono" font-size="20.83" fill="#12272e" xml:space="preserve" >Internet Protocol Version 4, Src: 10.0.2.15, Dst: 10.0.2.2</text>
<rect x="17.6" y="827.6800000000001" width="1.3" height="14.8" fill="#c4c6c8" />
<path d="M16.2 810.98 L24 818.68 L16.2 826.38" fill="none" stroke="#31363b" stroke-width="2"/>
<rect x="27.2" y="819.28" width="7.7" height="1.3" fill="#c8c8c8" />
<text transform="translate(39.8 824.38) scale(1 1.01)" x="0" y="0" font-family="Liberation Mono" font-size="20.83" fill="#12272e" xml:space="preserve" >Transmission Control Protocol, Src Port: 22, Dst Port: 39456, Seq: 1, Ack: 1, Len: 36</text>
<path d="M16.2 844.54 L24 852.24 L16.2 859.94" fill="none" stroke="#31363b" stroke-width="2"/>
<rect x="27.2" y="852.84" width="7.7" height="1.3" fill="#c8c8c8" />
<text transform="translate(39.8 857.94) scale(1 1.01)" x="0" y="0" font-family="Liberation Mono" font-size="20.83" fill="#12272e" xml:space="preserve" >SSH Protocol</text>
<rect x="17.6" y="702" width="1.3" height="5.5" fill="#c4c6c8" />
<rect x="2.25" y="1198.5" width="3195.5" height="490.75" rx="3" fill="#ffffff" stroke="#bcc0c4" stroke-width="1.5"/>
<rect x="3" y="1199.2" width="74.8" height="489.5" fill="#eef1f4" />
<text transform="translate(15.6 1217.0) scale(1 1.035)" x="0" y="0" font-family="Liberation Mono" font-size="20.7" fill="#a3a6a8" letter-spacing="0.408" xml:space="preserve" >0000</text>
<text transform="translate(92.8 1217.0) scale(1 1.035)" x="0" y="0" font-family="Liberation Mono" font-size="20.7" fill="#232629" letter-spacing="0.408" xml:space="preserve" >52 54 00 12 35 02 08 00  27 b1 28 5d 08 00 45 10</text>
<text transform="translate(745.1 1217.0) scale(1 1.035)" x="0" y="0" font-family="Liberation Mono" font-size="20.7" fill="#232629" xml:space="preserve" >R</text>
<text transform="translate(757.93 1217.0) scale(1 1.035)" x="0" y="0" font-family="Liberation Mono" font-size="20.7" fill="#232629" xml:space="preserve" >T</text>
<rect x="775.86" y="1209.60" width="2.2" height="2.4" fill="#a8a8a8"/>
<rect x="788.69" y="1209.60" width="2.2" height="2.4" fill="#a8a8a8"/>
<text transform="translate(796.42 1217.0) scale(1 1.035)" x="0" y="0" font-family="Liberation Mono" font-size="20.7" fill="#232629" xml:space="preserve" >5</text>
<rect x="814.35" y="1209.60" width="2.2" height="2.4" fill="#a8a8a8"/>
<rect x="827.18" y="1209.60" width="2.2" height="2.4" fill="#a8a8a8"/>
<rect x="840.01" y="1209.60" width="2.2" height="2.4" fill="#a8a8a8"/>
<text transform="translate(860.57 1217.0) scale(1 1.035)" x="0" y="0" font-family="Liberation Mono" font-size="20.7" fill="#232629" xml:space="preserve" >'</text>
<rect x="878.50" y="1209.60" width="2.2" height="2.4" fill="#a8a8a8"/>
<text transform="translate(886.23 1217.0) scale(1 1.035)" x="0" y="0" font-family="Liberation Mono" font-size="20.7" fill="#232629" xml:space="preserve" >(</text>
<text transform="translate(899.06 1217.0) scale(1 1.035)" x="0" y="0" font-family="Liberation Mono" font-size="20.7" fill="#232629" xml:space="preserve" >]</text>
<rect x="916.99" y="1209.60" width="2.2" height="2.4" fill="#a8a8a8"/>
<rect x="929.82" y="1209.60" width="2.2" height="2.4" fill="#a8a8a8"/>
<text transform="translate(937.55 1217.0) scale(1 1.035)" x="0" y="0" font-family="Liberation Mono" font-size="20.7" fill="#232629" xml:space="preserve" >E</text>
<rect x="955.48" y="1209.60" width="2.2" height="2.4" fill="#a8a8a8"/>
<text transform="translate(15.6 1240.95) scale(1 1.035)" x="0" y="0" font-family="Liberation Mono" font-size="20.7" fill="#a3a6a8" letter-spacing="0.408" xml:space="preserve" >0010</text>
<text transform="translate(92.8 1240.95) scale(1 1.035)" x="0" y="0" font-family="Liberation Mono" font-size="20.7" fill="#232629" letter-spacing="0.408" xml:space="preserve" >00 4c 16 59 40 00 40 06  0c 33 0a 00 02 0f 0a 00</text>
<rect x="750.20" y="1233.55" width="2.2" height="2.4" fill="#a8a8a8"/>
<text transform="translate(757.93 1240.95) scale(1 1.035)" x="0" y="0" font-family="Liberation Mono" font-size="20.7" fill="#232629" xml:space="preserve" >L</text>
<rect x="775.86" y="1233.55" width="2.2" height="2.4" fill="#a8a8a8"/>
<text transform="translate(783.59 1240.95) scale(1 1.035)" x="0" y="0" font-family="Liberation Mono" font-size="20.7" fill="#232629" xml:space="preserve" >Y</text>
<text transform="translate(796.42 1240.95) scale(1 1.035)" x="0" y="0" font-family="Liberation Mono" font-size="20.7" fill="#232629" xml:space="preserve" >@</text>
<rect x="814.35" y="1233.55" width="2.2" height="2.4" fill="#a8a8a8"/>
<text transform="translate(822.08 1240.95) scale(1 1.035)" x="0" y="0" font-family="Liberation Mono" font-size="20.7" fill="#232629" xml:space="preserve" >@</text>
<rect x="840.01" y="1233.55" width="2.2" height="2.4" fill="#a8a8a8"/>
<rect x="865.67" y="1233.55" width="2.2" height="2.4" fill="#a8a8a8"/>
<text transform="translate(873.4 1240.95) scale(1 1.035)" x="0" y="0" font-family="Liberation Mono" font-size="20.7" fill="#232629" xml:space="preserve" >3</text>
<rect x="891.33" y="1233.55" width="2.2" height="2.4" fill="#a8a8a8"/>
<rect x="904.16" y="1233.55" width="2.2" height="2.4" fill="#a8a8a8"/>
<rect x="916.99" y="1233.55" width="2.2" height="2.4" fill="#a8a8a8"/>
<rect x="929.82" y="1233.55" width="2.2" height="2.4" fill="#a8a8a8"/>
<rect x="942.65" y="1233.55" width="2.2" height="2.4" fill="#a8a8a8"/>
<rect x="955.48" y="1233.55" width="2.2" height="2.4" fill="#a8a8a8"/>
<text transform="translate(15.6 1264.9) scale(1 1.035)" x="0" y="0" font-family="Liberation Mono" font-size="20.7" fill="#a3a6a8" letter-spacing="0.408" xml:space="preserve" >0020</text>
<text transform="translate(92.8 1264.9) scale(1 1.035)" x="0" y="0" font-family="Liberation Mono" font-size="20.7" fill="#232629" letter-spacing="0.408" xml:space="preserve" >02 02 00 16 9a 20 e3 3c  16 9e 00 30 46 4f 50 18</text>
<rect x="750.20" y="1257.50" width="2.2" height="2.4" fill="#a8a8a8"/>
<rect x="763.03" y="1257.50" width="2.2" height="2.4" fill="#a8a8a8"/>
<rect x="775.86" y="1257.50" width="2.2" height="2.4" fill="#a8a8a8"/>
<rect x="788.69" y="1257.50" width="2.2" height="2.4" fill="#a8a8a8"/>
<rect x="801.52" y="1257.50" width="2.2" height="2.4" fill="#a8a8a8"/>
<rect x="827.18" y="1257.50" width="2.2" height="2.4" fill="#a8a8a8"/>
<text transform="translate(834.91 1264.9) scale(1 1.035)" x="0" y="0" font-family="Liberation Mono" font-size="20.7" fill="#232629" xml:space="preserve" >&lt;</text>
<rect x="865.67" y="1257.50" width="2.2" height="2.4" fill="#a8a8a8"/>
<rect x="878.50" y="1257.50" width="2.2" height="2.4" fill="#a8a8a8"/>
<rect x="891.33" y="1257.50" width="2.2" height="2.4" fill="#a8a8a8"/>
<text transform="translate(899.06 1264.9) scale(1 1.035)" x="0" y="0" font-family="Liberation Mono" font-size="20.7" fill="#232629" xml:space="preserve" >0</text>
<text transform="translate(911.89 1264.9) scale(1 1.035)" x="0" y="0" font-family="Liberation Mono" font-size="20.7" fill="#232629" xml:space="preserve" >F</text>
<text transform="translate(924.72 1264.9) scale(1 1.035)" x="0" y="0" font-family="Liberation Mono" font-size="20.7" fill="#232629" xml:space="preserve" >O</text>
<text transform="translate(937.55 1264.9) scale(1 1.035)" x="0" y="0" font-family="Liberation Mono" font-size="20.7" fill="#232629" xml:space="preserve" >P</text>
<rect x="955.48" y="1257.50" width="2.2" height="2.4" fill="#a8a8a8"/>
<text transform="translate(15.6 1288.85) scale(1 1.035)" x="0" y="0" font-family="Liberation Mono" font-size="20.7" fill="#a3a6a8" letter-spacing="0.408" xml:space="preserve" >0030</text>
<text transform="translate(92.8 1288.85) scale(1 1.035)" x="0" y="0" font-family="Liberation Mono" font-size="20.7" fill="#232629" letter-spacing="0.408" xml:space="preserve" >f5 3c 18 4f 00 00 62 b9  b4 d2 be b2 c9 6d 75 4c</text>
<rect x="750.20" y="1281.45" width="2.2" height="2.4" fill="#a8a8a8"/>
<text transform="translate(757.93 1288.85) scale(1 1.035)" x="0" y="0" font-family="Liberation Mono" font-size="20.7" fill="#232629" xml:space="preserve" >&lt;</text>
<rect x="775.86" y="1281.45" width="2.2" height="2.4" fill="#a8a8a8"/>
<text transform="translate(783.59 1288.85) scale(1 1.035)" x="0" y="0" font-family="Liberation Mono" font-size="20.7" fill="#232629" xml:space="preserve" >O</text>
<rect x="801.52" y="1281.45" width="2.2" height="2.4" fill="#a8a8a8"/>
<rect x="814.35" y="1281.45" width="2.2" height="2.4" fill="#a8a8a8"/>
<text transform="translate(822.08 1288.85) scale(1 1.035)" x="0" y="0" font-family="Liberation Mono" font-size="20.7" fill="#232629" xml:space="preserve" >b</text>
<rect x="840.01" y="1281.45" width="2.2" height="2.4" fill="#a8a8a8"/>
<rect x="865.67" y="1281.45" width="2.2" height="2.4" fill="#a8a8a8"/>
<rect x="878.50" y="1281.45" width="2.2" height="2.4" fill="#a8a8a8"/>
<rect x="891.33" y="1281.45" width="2.2" height="2.4" fill="#a8a8a8"/>
<rect x="904.16" y="1281.45" width="2.2" height="2.4" fill="#a8a8a8"/>
<rect x="916.99" y="1281.45" width="2.2" height="2.4" fill="#a8a8a8"/>
<text transform="translate(924.72 1288.85) scale(1 1.035)" x="0" y="0" font-family="Liberation Mono" font-size="20.7" fill="#232629" xml:space="preserve" >m</text>
<text transform="translate(937.55 1288.85) scale(1 1.035)" x="0" y="0" font-family="Liberation Mono" font-size="20.7" fill="#232629" xml:space="preserve" >u</text>
<text transform="translate(950.38 1288.85) scale(1 1.035)" x="0" y="0" font-family="Liberation Mono" font-size="20.7" fill="#232629" xml:space="preserve" >L</text>
<text transform="translate(15.6 1312.8) scale(1 1.035)" x="0" y="0" font-family="Liberation Mono" font-size="20.7" fill="#a3a6a8" letter-spacing="0.408" xml:space="preserve" >0040</text>
<text transform="translate(92.8 1312.8) scale(1 1.035)" x="0" y="0" font-family="Liberation Mono" font-size="20.7" fill="#232629" letter-spacing="0.408" xml:space="preserve" >86 06 82 ff 22 6a b1 05  8a 63 62 62 1b 44 f1 c9</text>
<rect x="750.20" y="1305.40" width="2.2" height="2.4" fill="#a8a8a8"/>
<rect x="763.03" y="1305.40" width="2.2" height="2.4" fill="#a8a8a8"/>
<rect x="775.86" y="1305.40" width="2.2" height="2.4" fill="#a8a8a8"/>
<rect x="788.69" y="1305.40" width="2.2" height="2.4" fill="#a8a8a8"/>
<text transform="translate(796.42 1312.8) scale(1 1.035)" x="0" y="0" font-family="Liberation Mono" font-size="20.7" fill="#232629" xml:space="preserve" >"</text>
<text transform="translate(809.25 1312.8) scale(1 1.035)" x="0" y="0" font-family="Liberation Mono" font-size="20.7" fill="#232629" xml:space="preserve" >j</text>
<rect x="827.18" y="1305.40" width="2.2" height="2.4" fill="#a8a8a8"/>
<rect x="840.01" y="1305.40" width="2.2" height="2.4" fill="#a8a8a8"/>
<rect x="865.67" y="1305.40" width="2.2" height="2.4" fill="#a8a8a8"/>
<text transform="translate(873.4 1312.8) scale(1 1.035)" x="0" y="0" font-family="Liberation Mono" font-size="20.7" fill="#232629" xml:space="preserve" >c</text>
<text transform="translate(886.23 1312.8) scale(1 1.035)" x="0" y="0" font-family="Liberation Mono" font-size="20.7" fill="#232629" xml:space="preserve" >b</text>
<text transform="translate(899.06 1312.8) scale(1 1.035)" x="0" y="0" font-family="Liberation Mono" font-size="20.7" fill="#232629" xml:space="preserve" >b</text>
<rect x="916.99" y="1305.40" width="2.2" height="2.4" fill="#a8a8a8"/>
<text transform="translate(924.72 1312.8) scale(1 1.035)" x="0" y="0" font-family="Liberation Mono" font-size="20.7" fill="#232629" xml:space="preserve" >D</text>
<rect x="942.65" y="1305.40" width="2.2" height="2.4" fill="#a8a8a8"/>
<rect x="955.48" y="1305.40" width="2.2" height="2.4" fill="#a8a8a8"/>
<text transform="translate(15.6 1336.75) scale(1 1.035)" x="0" y="0" font-family="Liberation Mono" font-size="20.7" fill="#a3a6a8" letter-spacing="0.408" xml:space="preserve" >0050</text>
<text transform="translate(92.8 1336.75) scale(1 1.035)" x="0" y="0" font-family="Liberation Mono" font-size="20.7" fill="#232629" letter-spacing="0.408" xml:space="preserve" >27 da db a4 50 6d 94 84  2b 91</text>
<text transform="translate(745.1 1336.75) scale(1 1.035)" x="0" y="0" font-family="Liberation Mono" font-size="20.7" fill="#232629" xml:space="preserve" >'</text>
<rect x="763.03" y="1329.35" width="2.2" height="2.4" fill="#a8a8a8"/>
<rect x="775.86" y="1329.35" width="2.2" height="2.4" fill="#a8a8a8"/>
<rect x="788.69" y="1329.35" width="2.2" height="2.4" fill="#a8a8a8"/>
<text transform="translate(796.42 1336.75) scale(1 1.035)" x="0" y="0" font-family="Liberation Mono" font-size="20.7" fill="#232629" xml:space="preserve" >P</text>
<text transform="translate(809.25 1336.75) scale(1 1.035)" x="0" y="0" font-family="Liberation Mono" font-size="20.7" fill="#232629" xml:space="preserve" >m</text>
<rect x="827.18" y="1329.35" width="2.2" height="2.4" fill="#a8a8a8"/>
<rect x="840.01" y="1329.35" width="2.2" height="2.4" fill="#a8a8a8"/>
<text transform="translate(860.57 1336.75) scale(1 1.035)" x="0" y="0" font-family="Liberation Mono" font-size="20.7" fill="#232629" xml:space="preserve" >+</text>
<rect x="878.50" y="1329.35" width="2.2" height="2.4" fill="#a8a8a8"/>
<defs><linearGradient id="sbg" x1="0" y1="0" x2="0" y2="1"><stop offset="0" stop-color="#eef1f4"/><stop offset="1" stop-color="#d9dbde"/></linearGradient></defs>
<rect x="0" y="1720.5" width="3200" height="7.5" fill="url(#sbg)" />
<circle cx="26.9" cy="1709" r="10.4" fill="url(#yel)" stroke="#6c6a2c" stroke-width="1.2"/>
<rect x="54.4" y="1698.1" width="16" height="21.3" fill="#f6f6ee" stroke="#c4c6c4" stroke-width="0.8"/>
<path d="M54.3 1698 L66.5 1698 L67.3 1699 L67.3 1703.4 L54.3 1703.4 Z" fill="url(#fileb)"/>
<path d="M57.8 1703.4 C58.3 1701.2 59.5 1700.2 60.6 1700 C60.1 1701 60 1702.2 60.4 1703.4 Z" fill="#ffffff"/>
<rect x="56" y="1706.8" width="10.5" height="1.8" fill="#c9cac4" />
<rect x="56" y="1711.4" width="10.5" height="1.8" fill="#c9cac4" />
<rect x="56" y="1716" width="10.5" height="1.8" fill="#c9cac4" />
<path d="M62.2 1711 L72.5 1700.8" stroke="#5a5c5a" stroke-width="4.6" stroke-linecap="butt"/>
<circle cx="73.3" cy="1700.1" r="2.3" fill="#5a5c5a"/>
<path d="M59.2 1713.6 L60.6 1709.7 L63.3 1712.3 Z" fill="#000000" stroke="#000" stroke-width="0.6" stroke-linejoin="round"/>
<text x="103" y="1718.3" font-family="Liberation Sans" font-size="21.7" fill="#232629" textLength="109" lengthAdjust="spacingAndGlyphs" >dump.pcap</text>
<text x="2216.3" y="1718.6" font-family="Liberation Sans" font-size="21.7" fill="#232629" textLength="373.7" lengthAdjust="spacingAndGlyphs" >Пакеты: 100 · Показаны: 100 (100.0%)</text>
<text x="3017.1" y="1718.9" font-family="Liberation Sans" font-size="21.7" fill="#232629" textLength="173.8" lengthAdjust="spacingAndGlyphs" >Профиль: Default</text>
</svg></body></html>
